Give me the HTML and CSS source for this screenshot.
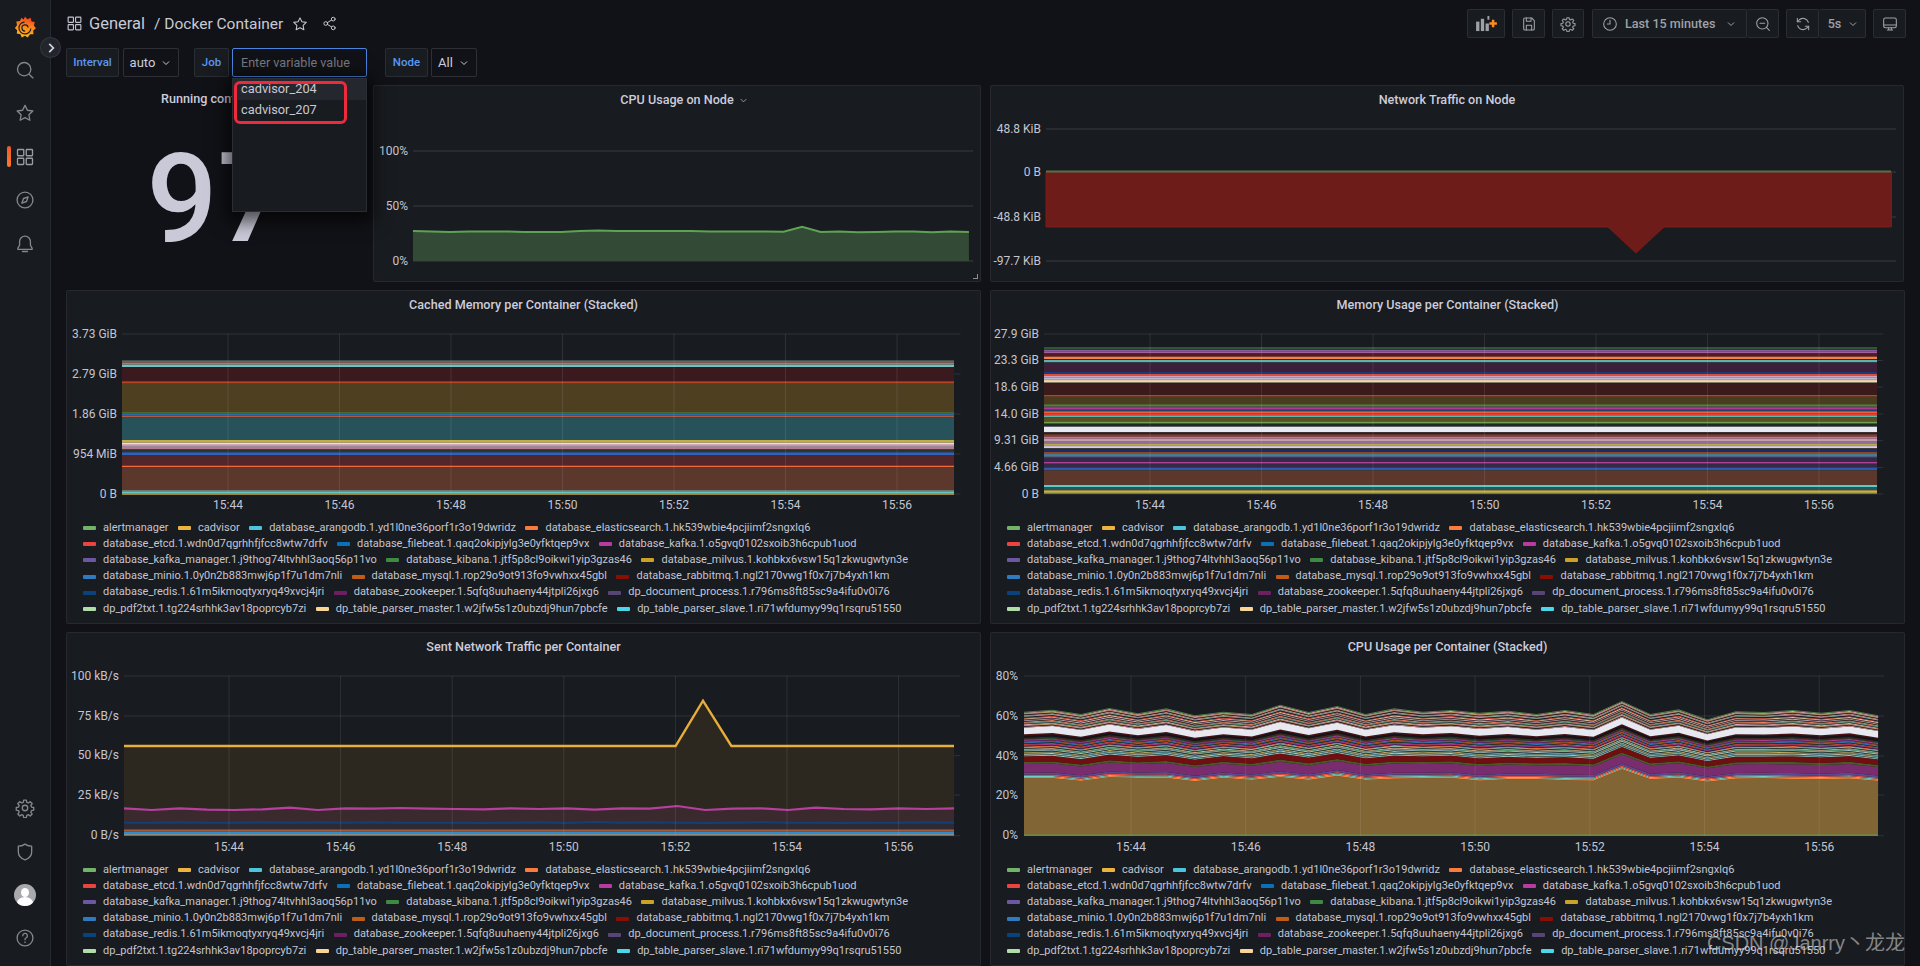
FILE: index.html
```html
<!DOCTYPE html>
<html lang="en">
<head>
<meta charset="utf-8">
<title>Docker Container - Grafana</title>
<link rel="stylesheet" href="styles.css">
</head>
<body>
<div class="app">
  <nav class="sidebar">
    <button class="side-toggle" aria-label="Expand"><svg viewBox="0 0 24 24" class="ico-toggle"><path d="M9 5l7 7-7 7"/></svg></button>
    <div class="side-group side-top">
      <a class="side-item"><svg viewBox="0 0 24 24" class="logo">
        <defs><linearGradient id="lg" x1="0.6" y1="0" x2="0.35" y2="1"><stop offset="0" stop-color="#f2401c"/><stop offset="0.5" stop-color="#fa8a1c"/><stop offset="1" stop-color="#fdbb18"/></linearGradient></defs>
        <path fill="url(#lg)" d="M12 .6l2.6 3 3.5-1.6 1 3.900 3.600.7-1 3.800 2.200 3-2.900 2.500.2 4-3.700.1L15 23.400l-3-1.800-3.500 1.800-1.500-3.600-4-.6.5-3.700L1 13l2.300-3-.8-4 4-.5L8 1.900l2.500 2z"/>
        <path fill="none" stroke="#1a1c20" stroke-width="1.300" d="M11.500 6.600a6.500 6.500 0 1 0 6.900 7.100"/>
        <path fill="none" stroke="#1a1c20" stroke-width="1.300" d="M15.400 12.600a3.400 3.400 0 1 0-3.200 3.800"/>
      </svg></a>
      <a class="side-item"><svg viewBox="0 0 24 24" class="ico"><circle cx="11" cy="11" r="8"/><path d="M17 17l4.500 4.500"/></svg></a>
      <a class="side-item"><svg viewBox="0 0 24 24" class="ico"><path d="M12 2.800l2.900 5.900 6.500.9-4.700 4.600 1.100 6.500-5.800-3.100-5.800 3.100 1.100-6.500-4.700-4.600 6.500-.9z"/></svg></a>
      <a class="side-item side-active"><svg viewBox="0 0 24 24" class="ico ico-on"><rect x="3" y="3" width="7.500" height="7.500" rx=".8"/><rect x="13.500" y="3" width="7.500" height="7.500" rx=".8"/><rect x="3" y="13.500" width="7.500" height="7.500" rx=".8"/><rect x="13.500" y="13.500" width="7.500" height="7.500" rx=".8"/></svg></a>
      <a class="side-item"><svg viewBox="0 0 24 24" class="ico"><circle cx="12" cy="12" r="9.500"/><path d="M15.800 8.200l-2 5.600-5.600 2 2-5.600z"/></svg></a>
      <a class="side-item"><svg viewBox="0 0 24 24" class="ico"><path d="M12 2.500a6.500 6.500 0 0 0-6.500 6.500v4.500L3.500 17v1.500h17V17l-2-3.500V9A6.500 6.500 0 0 0 12 2.500z"/><path d="M9 21h6"/></svg></a>
    </div>
    <div class="side-group side-bottom">
      <a class="side-item"><svg viewBox="0 0 24 24" class="ico"><circle cx="12" cy="12" r="3.300"/><path d="M10.400 2.500h3.200l.5 2.700 1.900.8 2.300-1.600 2.300 2.300-1.600 2.300.8 1.900 2.700.5v3.200l-2.700.5-.8 1.900 1.600 2.300-2.300 2.300-2.300-1.600-1.900.8-.5 2.700h-3.200l-.5-2.700-1.900-.8-2.300 1.600-2.300-2.300 1.600-2.300-.8-1.900-2.700-.5v-3.200l2.700-.5.8-1.900-1.600-2.300 2.300-2.300 2.300 1.600 1.900-.8z"/></svg></a>
      <a class="side-item"><svg viewBox="0 0 24 24" class="ico"><path d="M12 2.500c2.500 1.700 5.200 2.500 8 2.500v7c0 4.500-3.200 7.800-8 9.500-4.800-1.700-8-5-8-9.500V5c2.800 0 5.500-.8 8-2.500z"/></svg></a>
      <a class="side-item"><span class="avatar"><span class="avatar-head"></span><span class="avatar-body"></span></span></a>
      <a class="side-item"><svg viewBox="0 0 24 24" class="ico"><circle cx="12" cy="12" r="9.500"/><path d="M9.300 9.300a2.800 2.800 0 1 1 4.200 2.400c-1 .6-1.500 1.200-1.500 2.300"/><path d="M12 16.800v.6"/></svg></a>
    </div>
  </nav>

  <main class="main">
    <header class="topbar">
      <svg viewBox="0 0 24 24" class="tico crumb-ico"><rect x="3" y="3" width="7.500" height="7.500" rx=".8"/><rect x="13.500" y="3" width="7.500" height="7.500" rx=".8"/><rect x="3" y="13.500" width="7.500" height="7.500" rx=".8"/><rect x="13.500" y="13.500" width="7.500" height="7.500" rx=".8"/></svg>
      <span class="crumb">General</span>
      <span class="crumb crumb-sep">/ Docker Container</span>
      <svg viewBox="0 0 24 24" class="tico crumb-star"><path d="M12 2.800l2.900 5.900 6.500.9-4.700 4.600 1.100 6.500-5.800-3.100-5.800 3.100 1.100-6.500-4.700-4.600 6.500-.9z"/></svg>
      <svg viewBox="0 0 24 24" class="tico crumb-share"><circle cx="18" cy="5" r="3"/><circle cx="6" cy="12" r="3"/><circle cx="18" cy="19" r="3"/><path d="M8.700 10.500l6.600-4M8.700 13.500l6.600 4"/></svg>
      <div class="tools">
        <button class="tbtn t-add"><svg viewBox="0 0 24 18" class="addico"><rect x="1" y="7" width="3.500" height="10" /><rect x="6" y="4" width="3.500" height="13"/><rect x="11" y="9" width="3.500" height="8"/><rect x="13" y="1" width="2" height="4"/><path class="plus" d="M15 9h8M19 5v8"/></svg></button>
        <button class="tbtn t-save"><svg viewBox="0 0 24 24" class="bico"><path d="M4 5a2 2 0 0 1 2-2h10l4 4v12a2 2 0 0 1-2 2H6a2 2 0 0 1-2-2z"/><path d="M8 3v5h7V3M8 21v-7h8v7"/></svg></button>
        <button class="tbtn t-set"><svg viewBox="0 0 24 24" class="bico"><circle cx="12" cy="12" r="3.300"/><path d="M10.400 2.500h3.200l.5 2.700 1.900.8 2.300-1.600 2.300 2.300-1.600 2.300.8 1.900 2.700.5v3.200l-2.700.5-.8 1.900 1.600 2.300-2.300 2.300-2.300-1.600-1.900.8-.5 2.700h-3.200l-.5-2.700-1.900-.8-2.300 1.600-2.300-2.300 1.600-2.300-.8-1.900-2.700-.5v-3.200l2.700-.5.8-1.900-1.600-2.300 2.300-2.300 2.300 1.600 1.900-.8z"/></svg></button>
        <div class="tgroup t-time">
          <button class="tbtn t-range"><svg viewBox="0 0 24 24" class="bico"><circle cx="12" cy="12" r="9.500"/><path d="M12 6.500V12H8"/></svg><span class="trange-text">Last 15 minutes</span><svg viewBox="0 0 24 24" class="chev"><path d="M6 9l6 6 6-6"/></svg></button>
          <button class="tbtn t-zoom"><svg viewBox="0 0 24 24" class="bico"><circle cx="11" cy="11" r="8.500"/><path d="M17.200 17.200l4.300 4.300M7.500 11h7"/></svg></button>
        </div>
        <div class="tgroup t-refresh">
          <button class="tbtn t-sync"><svg viewBox="0 0 24 24" class="bico"><path d="M20 9.500A8.500 8.500 0 0 0 5.500 6.500L3.500 8.500"/><path d="M3.500 3.500v5h5"/><path d="M4 14.500a8.500 8.500 0 0 0 14.500 3l2-2"/><path d="M20.500 20.500v-5h-5"/></svg></button>
          <button class="tbtn t-int"><span class="trange-text">5s</span><svg viewBox="0 0 24 24" class="chev"><path d="M6 9l6 6 6-6"/></svg></button>
        </div>
        <button class="tbtn t-tv"><svg viewBox="0 0 24 24" class="bico"><rect x="2.500" y="3" width="19" height="14.500" rx="2.500"/><path d="M2.500 13.500h19M8 21h8M10 17.500V21M14 17.500V21"/></svg></button>
      </div>
    </header>

    <div class="vars">
      <span class="var-label v-interval">Interval</span>
      <button class="var-value v-auto">auto<svg viewBox="0 0 24 24" class="chev"><path d="M6 9l6 6 6-6"/></svg></button>
      <span class="var-label v-job">Job</span>
      <div class="var-input">
        <span class="placeholder">Enter variable value</span>
        <div class="dropdown">
          <div class="dd-item dd-hover">cadvisor_204</div>
          <div class="dd-item">cadvisor_207</div>
          <span class="dd-mark"></span>
        </div>
      </div>
      <span class="var-label v-node">Node</span>
      <button class="var-value v-all">All<svg viewBox="0 0 24 24" class="chev"><path d="M6 9l6 6 6-6"/></svg></button>
    </div>

    <div class="dash">
      <div class="row row-top">
        <section class="stat">
          <h2 class="p-title">Running containers</h2>
          <div class="stat-value">97</div>
        </section>
        <section class="panel">
          <h2 class="p-title">CPU Usage on Node<svg viewBox="0 0 24 24" class="chev title-chev"><path d="M6 9l6 6 6-6"/></svg></h2>
          <svg class="chart chart-s" data-chart="nodeCpu"></svg>
          <span class="resize"></span>
        </section>
        <section class="panel">
          <h2 class="p-title">Network Traffic on Node</h2>
          <svg class="chart chart-s" data-chart="nodeNet"></svg>
        </section>
      </div>
      <div class="row row-wide">
        <section class="panel">
          <h2 class="p-title">Cached Memory per Container (Stacked)</h2>
          <svg class="chart chart-l" data-chart="cached"></svg>
          <div class="legend"></div>
        </section>
        <section class="panel">
          <h2 class="p-title">Memory Usage per Container (Stacked)</h2>
          <svg class="chart chart-l" data-chart="memory"></svg>
          <div class="legend"></div>
        </section>
      </div>
      <div class="row row-wide">
        <section class="panel">
          <h2 class="p-title">Sent Network Traffic per Container</h2>
          <svg class="chart chart-l" data-chart="sent"></svg>
          <div class="legend"></div>
        </section>
        <section class="panel">
          <h2 class="p-title">CPU Usage per Container (Stacked)</h2>
          <svg class="chart chart-l" data-chart="cpu"></svg>
          <div class="legend"></div>
        </section>
      </div>
    </div>
  </main>
</div>
<div class="watermark">CSDN @Janrry丶龙龙</div>
<script src="charts.js"></script>
</body>
</html>
```
FILE: styles.css
```css
* { box-sizing: border-box; }
html, body { margin: 0; height: 966px; overflow: hidden; }
body { background: #111217; color: #ccccdc; font-family: Roboto, "Liberation Sans", sans-serif; font-size: 13px; }
button { font: inherit; color: inherit; background: none; border: 0; padding: 0; }
.app { display: flex; height: 966px; }

.sidebar { position: relative; flex: none; width: 51px; height: 100%; background: #181b1f; border-right: 1px solid rgba(204,204,220,.09); display: flex; flex-direction: column; justify-content: space-between; z-index: 3; }
.side-top { padding-top: 5px; }
.side-bottom { padding-bottom: 6px; }
.side-item { position: relative; display: flex; align-items: center; justify-content: center; height: 43.4px; }
.ico { width: 20px; height: 20px; fill: none; stroke: #85878f; stroke-width: 1.6; stroke-linejoin: round; stroke-linecap: round; }
.ico-on { stroke: #9a9ca4; }
.logo { width: 22px; height: 24px; }
.side-active::before { content: ""; position: absolute; left: 7px; top: 11px; width: 4px; height: 21px; border-radius: 2px; background: linear-gradient(#f05a28, #fb7a2c); }
.side-toggle { position: absolute; left: 40px; top: 37px; width: 21px; height: 21px; border-radius: 50%; background: #22252b; border: 1px solid rgba(204,204,220,.1); display: flex; align-items: center; justify-content: center; z-index: 4; }
.ico-toggle { width: 14px; height: 14px; fill: none; stroke: #d0d1da; stroke-width: 3; }
.avatar { position: relative; display: block; width: 22px; height: 22px; border-radius: 50%; background: #a9a9ad; overflow: hidden; }
.avatar-head { position: absolute; left: 7px; top: 4px; width: 8px; height: 9px; border-radius: 50%; background: #fff; }
.avatar-body { position: absolute; left: 3px; top: 13px; width: 16px; height: 12px; border-radius: 50%; background: #fff; }

.main { flex: 1; min-width: 0; padding: 9px 14px 0 15px; }
.topbar { display: flex; align-items: center; height: 29px; margin-bottom: 10px; }
.tico { fill: none; stroke: #c4c5d0; stroke-width: 1.6; stroke-linejoin: round; stroke-linecap: round; flex: none; }
.crumb-ico { width: 17px; height: 17px; margin-left: 0; margin-right: 6px; }
.crumb { font-size: 16.5px; color: #c8c9d4; }
.crumb-sep { margin-left: 9px; font-size: 15.5px; }
.crumb-star { width: 16px; height: 16px; margin-left: 9px; }
.crumb-share { width: 15px; height: 15px; margin-left: 14px; }

.tools { display: flex; align-items: center; margin-left: auto; gap: 7px; }
.tbtn { display: flex; align-items: center; justify-content: center; height: 29px; background: #181b1f; border: 1px solid rgba(204,204,220,.1); border-radius: 2px; color: #9fa1a9; font-size: 12.6px; font-weight: 500; white-space: nowrap; }
.tgroup { display: flex; }
.tgroup .tbtn + .tbtn { border-left: 0; }
.t-add { width: 38px; }
.t-save { width: 33px; }
.t-set { width: 32px; }
.t-time { margin-left: 1px; }
.t-range { width: 155px; justify-content: flex-start; padding-left: 9px; }
.t-zoom { width: 32px; }
.t-sync { width: 33px; }
.t-int { width: 47px; padding-left: 3px; }
.t-tv { width: 33px; }
.bico { width: 16px; height: 16px; fill: none; stroke: #9fa1a9; stroke-width: 1.6; stroke-linejoin: round; stroke-linecap: round; flex: none; }
.addico { width: 23px; height: 17px; fill: #9fa1a9; }
.plus { fill: none; stroke: #fb8c22; stroke-width: 2.6; }
.trange-text { margin-left: 7px; }
.t-int .trange-text { margin-left: 0; }
.chev { width: 12px; height: 12px; fill: none; stroke: currentColor; stroke-width: 2; flex: none; }
.t-range .chev { margin-left: 10px; }
.t-int .chev { margin-left: 6px; }

.vars { display: flex; align-items: stretch; height: 29px; margin-bottom: 8px; }
.var-label { display: flex; align-items: center; justify-content: center; background: #181b1f; border: 1px solid rgba(204,204,220,.1); border-radius: 2px; color: #5a97f4; font-size: 11.5px; font-weight: 500; padding-bottom: 2px; }
.var-value { display: flex; align-items: center; justify-content: center; gap: 5px; background: #111217; border: 1px solid rgba(204,204,220,.16); border-radius: 2px; color: #ccccdc; font-size: 13px; }
.v-interval { width: 53px; }
.v-auto { width: 56px; margin-left: 4px; }
.v-job { width: 35px; margin-left: 15px; }
.v-node { width: 43px; margin-left: 18px; }
.v-all { width: 46px; margin-left: 3px; }
.var-input { position: relative; width: 135px; margin-left: 3px; background: #111217; border: 1px solid #4a86e0; border-radius: 2px; display: flex; align-items: center; padding-left: 8px; }
.placeholder { color: #767a82; font-size: 12.6px; }
.dropdown { position: absolute; left: -1px; right: -1px; top: 29px; height: 134px; background: #181b1f; border: 1px solid rgba(204,204,220,.1); box-shadow: 0 4px 16px 6px rgba(0,0,0,.6); z-index: 5; }
.dd-item { height: 21px; line-height: 19px; padding-left: 8px; color: #c8c9d4; font-size: 12.8px; }
.dd-hover { background: #24272d; }
.dd-mark { position: absolute; left: 1px; top: 2px; width: 113px; height: 43px; border: 3px solid #ef2a3c; border-radius: 6px; }

.dash { display: flex; flex-direction: column; gap: 8px; }
.row { display: grid; }
.row-top { grid-template-columns: 299px 608px 915px; column-gap: 8px; height: 197px; }
.row-top > .panel:last-child { margin-left: 1px; }
.row-wide { grid-template-columns: 915px 915px; column-gap: 9px; height: 334px; }
.panel { position: relative; background: #181b1f; border: 1px solid rgba(204,204,220,.08); border-radius: 2px; min-width: 0; }
.p-title { margin: 0; height: 27px; padding-top: 6px; font-size: 12.6px; font-weight: 500; line-height: 16px; text-align: center; color: #ccccdc; white-space: nowrap; }
.title-chev { margin-left: 4px; margin-right: -15px; vertical-align: -2px; color: #9fa1a9; width: 11px; height: 11px; }
.chart { display: block; width: 100%; }
.chart-s { height: 168px; }
.chart-l { height: 201px; }
.chart text { font-family: Roboto, "Liberation Sans", sans-serif; font-size: 12px; fill: #c4c5d2; }
.resize { position: absolute; right: 2px; bottom: 2px; width: 5px; height: 5px; border-right: 1px solid #8d8f96; border-bottom: 1px solid #8d8f96; }
.stat { position: relative; min-width: 0; }
.stat-value { font-size: 125px; font-weight: 500; line-height: 125px; margin-top: 24px; padding-left: 4px; text-align: center; color: #c9c9d8; }

.legend { padding: 0 0 0 16px; font-size: 11px; color: #c4c5d2; }
.lg-row { display: flex; height: 16.2px; align-items: center; white-space: nowrap; }
.lg-item { display: flex; align-items: center; margin-right: 9.5px; }
.lg-swatch { width: 13px; height: 4px; border-radius: 1px; margin-right: 7px; margin-top: 2px; flex: none; }

.watermark { position: absolute; right: 15px; bottom: 10px; font-family: "Liberation Sans", "Noto Sans CJK SC", sans-serif; font-size: 20px; color: rgba(225,225,225,.55); z-index: 6; white-space: nowrap; }
```
FILE: charts.js
```js
(function () {
  var C = ['#73b26a','#eeb33f','#4cc4da','#f97c3e','#ea4440','#0a70b8','#ba3b9f','#6c58a0','#3f8a42','#c9a227','#2f7bbf','#c15c17','#890f02','#0a437c','#6d1f62','#584477','#b0dca8','#f8d496','#4bd6ea'];
  var names = [
    ['alertmanager','cadvisor','database_arangodb.1.yd1l0ne36porf1r3o19dwridz','database_elasticsearch.1.hk539wbie4pcjiimf2sngxlq6'],
    ['database_etcd.1.wdn0d7qgrhhfjfcc8wtw7drfv','database_filebeat.1.qaq2okipjylg3e0yfktqep9vx','database_kafka.1.o5gvq0102sxoib3h6cpub1uod'],
    ['database_kafka_manager.1.j9thog74ltvhhl3aoq56p11vo','database_kibana.1.jtf5p8cl9oikwi1yip3gzas46','database_milvus.1.kohbkx6vsw15q1zkwugwtyn3e'],
    ['database_minio.1.0y0n2b883mwj6p1f7u1dm7nli','database_mysql.1.rop29o9ot913fo9vwhxx45gbl','database_rabbitmq.1.ngl2170vwg1f0x7j7b4yxh1km'],
    ['database_redis.1.61m5ikmoqtyxryq49xvcj4jri','database_zookeeper.1.5qfq8uuhaeny44jtpli26jxg6','dp_document_process.1.r796ms8ft85sc9a4ifu0v0i76'],
    ['dp_pdf2txt.1.tg224srhhk3av18poprcyb7zi','dp_table_parser_master.1.w2jfw5s1z0ubzdj9hun7pbcfe','dp_table_parser_slave.1.ri71wfdumyy99q1rsqru51550']
  ];
  document.querySelectorAll('.legend').forEach(function (el) {
    var n = 0, html = '';
    names.forEach(function (row) {
      html += '<div class="lg-row">';
      row.forEach(function (t) {
        html += '<span class="lg-item"><i class="lg-swatch" style="background:' + C[n++] + '"></i>' + t + '</span>';
      });
      html += '</div>';
    });
    el.innerHTML = html;
  });

  var times = ['15:44','15:46','15:48','15:50','15:52','15:54','15:56'];
  var HGRID = 'rgba(204,204,220,.13)', VGRID = 'rgba(204,204,220,.12)';

  function poly(pts, fill, stroke, w) {
    return '<polygon points="' + pts.map(function (p) { return p[0].toFixed(1) + ',' + p[1].toFixed(1); }).join(' ') +
      '" fill="' + fill + '"' + (stroke ? ' stroke="' + stroke + '" stroke-width="' + (w || 1) + '"' : '') + '/>';
  }
  function line(pts, stroke, w) {
    return '<polyline fill="none" points="' + pts.map(function (p) { return p[0].toFixed(1) + ',' + p[1].toFixed(1); }).join(' ') +
      '" stroke="' + stroke + '" stroke-width="' + (w || 1) + '"/>';
  }
  function rect(x, y, w, h, fill) {
    return '<rect x="' + x + '" y="' + y + '" width="' + w + '" height="' + h + '" fill="' + fill + '"/>';
  }
  function frame(c, inner) {
    var s = '';
    c.y.forEach(function (t) {
      s += '<line x1="' + c.x0 + '" x2="' + c.x1 + '" y1="' + t[0] + '" y2="' + t[0] + '" stroke="' + HGRID + '" stroke-width="' + (c.hw || 1) + '"/>';
      s += '<text x="' + c.lx + '" y="' + (t[0] + 3.5) + '" text-anchor="end">' + t[1] + '</text>';
    });
    s += inner;
    if (c.t0) {
      times.forEach(function (t, i) {
        var x = c.t0 + c.ts * i;
        s += '<line x1="' + x + '" x2="' + x + '" y1="' + c.y[0][0] + '" y2="' + c.y[c.y.length - 1][0] + '" stroke="' + VGRID + '"/>';
        s += '<text x="' + x + '" y="' + c.ty + '" text-anchor="middle">' + t + '</text>';
      });
    }
    return s;
  }
  function bands(x0, x1, list) {
    return list.map(function (b) {
      return rect(x0, 300 + b[0] / 3, x1 - x0, (b[1] - b[0]) / 3, b[2]);
    }).join('');
  }

  var cachedBands = [
    [181,188,'#5b6a62'],[188,192,'#e0606a'],[192,194,'#8a7a70'],[194,201,'#74c0bc'],[201,244,'#3a1a1e'],
    [244,251,'#b5431f'],[251,335,'#4d3f20'],[335,340,'#4b6a2c'],[340,346,'#2a6bb0'],[346,349,'#6c58a0'],[349,352,'#f0703a'],
    [352,420,'#27525a'],[420,428,'#bfae4a'],[428,432,'#e9e2c0'],[432,436,'#d9a8c0'],[436,440,'#d0d0d8'],[440,447,'#b07a90'],
    [447,452,'#2b4a2e'],[452,457,'#3a3028'],[457,465,'#2f62b8'],[465,497,'#532729'],[497,502,'#f0693a'],[502,570,'#5c382c'],
    [570,574,'#6a7a70'],[574,581,'#5fc8c8'],[581,584,'#d8b040']
  ];
  var memoryBands = [
    [141,149,'#2c5a2e'],[150,155,'#8a5aa0'],[155,160,'#a060a0'],[160,170,'#541c22'],[170,177,'#f5804a'],[177,180,'#2a2a30'],[180,187,'#5fb0b0'],
    [188,216,'#3c1f38'],[216,222,'#1a3a80'],[222,228,'#d8503a'],[228,232,'#d0a0c0'],[232,238,'#b8b8d0'],[238,243,'#e8c8a0'],[243,248,'#e8e0b0'],[248,250,'#403030'],
    [250,285,'#3a1a1a'],[285,290,'#a84a22'],[290,313,'#4a3c20'],[313,320,'#55822f'],[320,324,'#7a3a90'],[324,328,'#b03a90'],[328,332,'#1a68b0'],[332,334,'#303040'],
    [334,340,'#f0603a'],[340,346,'#e04038'],[346,352,'#60b8a8'],[352,365,'#5a5028'],[365,371,'#70a050'],[371,380,'#1c2a22'],
    [380,397,'#e8e8f2'],[397,403,'#301c20'],[403,410,'#80402a'],[410,416,'#d07090'],[416,423,'#c0a0b0'],[423,430,'#907090'],[430,436,'#b8a850'],[436,441,'#c8b8d0'],[441,445,'#d0d0d8'],[445,447,'#303030'],
    [447,456,'#1e2a60'],[456,462,'#8a4a28'],[462,468,'#4a7a90'],[468,473,'#506080'],[473,486,'#352a45'],[486,491,'#b04098'],[491,503,'#352a45'],[503,511,'#2a5ab0'],
    [511,555,'#5c382c'],[555,561,'#5fc8c8'],[561,571,'#1e5a60'],[571,576,'#d8a840'],[576,581,'#a8a040']
  ];

  var charts = {
    nodeCpu: function () {
      var vals = [231,231.5,232,231.5,231.5,231.5,232,232,232,231,230.5,231,231,231,231,231,231.5,231.5,231.5,231.5,231.8,226.8,232,231.5,232.3,232,231.5,231.5,232.3,231.5,232];
      var pts = vals.map(function (v, i) { return [413 + i * 18.53, v]; });
      var area = poly([[413, 261]].concat(pts, [[969, 261]]), '#334a36');
      return frame({ y: [[151,'100%'],[206,'50%'],[261,'0%']], x0: 413, x1: 973, lx: 408, hw: 1.5 }, area + line(pts, '#5ea354', 2));
    },
    nodeNet: function () {
      var red = [[1046,172],[1891.5,172],[1891.5,227],[1664,227],[1636,253],[1608,227],[1046,227]];
      var inner = poly(red, '#6e1c1a', '#7e1a16', 1) + line([[1046,171.5],[1891,171.5]], '#56714a', 2);
      return frame({ y: [[129,'48.8 KiB'],[172,'0 B'],[217,'-48.8 KiB'],[261,'-97.7 KiB']], x0: 1046, x1: 1896, lx: 1041, hw: 1.5 }, inner);
    },
    cached: function () {
      return frame({ y: [[334,'3.73 GiB'],[374,'2.79 GiB'],[414,'1.86 GiB'],[454,'954 MiB'],[494,'0 B']], x0: 122, x1: 960.5, lx: 117, t0: 228, ts: 111.5, ty: 509 },
        bands(122, 954, cachedBands));
    },
    memory: function () {
      return frame({ y: [[334,'27.9 GiB'],[360.5,'23.3 GiB'],[387,'18.6 GiB'],[414,'14.0 GiB'],[440.7,'9.31 GiB'],[467.5,'4.66 GiB'],[494,'0 B']], x0: 1044, x1: 1883, lx: 1039, t0: 1150, ts: 111.5, ty: 509 },
        bands(1044, 1877, memoryBands));
    },
    sent: function () {
      var x = function (i) { return 124 + i * 27.67; };
      var pinkZ = [505,510,505,509,510,508,503,510,505,506,504,506,507,508,505,507,505,509,505,506,498,510,506,505,510,503,507,508,505,507,505];
      var navyZ = [548,548,547,548,548,547,548,547,548,547,548,548,548,549,548,547,549,546,548,547,548,549,548,547,548,548,549,548,548,547,548];
      var pink = pinkZ.map(function (z, i) { return [x(i), 640 + z / 3]; });
      var navy = navyZ.map(function (z, i) { return [x(i), 640 + z / 3]; });
      var cad = [[124,746],[675.6,746],[703,700.7],[731.4,746],[954,746]];
      var s = poly([[124,835.7]].concat(cad, [[954,835.7]]), '#2c2820');
      s += poly([[124,835.7]].concat(pink, [[954,835.7]]), '#3a2a2e');
      s += poly([[124,835.7]].concat(navy, [[954,835.7]]), '#2d2a34');
      s += rect(124, 829.5, 830, 1.5, '#a85a3a');
      s += rect(124, 831, 830, 1, '#3a6a70');
      s += rect(124, 832, 830, 2, '#2e8fd0');
      s += rect(124, 834, 830, 1.7, '#8a8a80');
      s += line(navy, '#123f78', 2) + line(pink, '#b83fa0', 2.2) + line(cad, '#e8ad3a', 2.4);
      return frame({ y: [[676,'100 kB/s'],[716,'75 kB/s'],[755.7,'50 kB/s'],[795,'25 kB/s'],[835.7,'0 B/s']], x0: 124, x1: 960, lx: 119, t0: 229, ts: 111.6, ty: 851 }, s);
    },
    cpu: function () {
      var topZ = [215,209,222,204,220,205,226,215,222,194,216,198,222,205,215,210,218,212,222,210,222,183,222,208,238,214,216,210,218,210,226];
      var baseZ = [415,415,423,412,414,414,424,414,420,412,420,408,420,416,415,414,422,418,418,421,422,388,418,414,425,416,415,417,418,416,423];
      var x = function (i) { return 1024 + i * 28.47; };
      function layer(a, b, color) {
        var fa = (415 - a) / 200, fb = (415 - b) / 200, up = [], down = [];
        topZ.forEach(function (t, i) {
          var base = baseZ[i], h = t - base;
          up.push([x(i), 640 + (base + fa * h) / 3]);
          down.unshift([x(i), 640 + (base + fb * h) / 3]);
        });
        return poly(up.concat(down), color);
      }
      function stripes(from, to, step, list) {
        var out = '', z = from, n = 0;
        while (z > to) { out += layer(z, z - step, list[n++ % list.length]); z -= step; }
        return out;
      }
      var s = poly([[1024,835.7]].concat(baseZ.map(function (z, i) { return [x(i), 640 + z / 3]; }), [[1878,835.7]]), '#816534');
      s += rect(1024, 834.5, 854, 1.2, '#6a9a50');
      [[415,411,'#f0843c'],[411,408,'#6ed0c0'],[408,404,'#e24d42'],[404,398,'#584a90'],[398,372,'#7a2d6e'],[372,366,'#4a5a26'],[366,349,'#6e0f12']]
        .forEach(function (b) { s += layer(b[0], b[1], b[2]); });
      s += stripes(349, 322, 2.5, ['#8fd0c8','#4a6a60','#c8d0b0','#3f8aa0','#c8b060','#2c3a38','#a8c8d0','#5aa878','#e0b090','#2a4038']);
      s += stripes(322, 298, 2.5, ['#f0703a','#26285a','#a83a98','#e04a40','#1c3a28','#2f7bbf','#c15c17','#5a2a80','#b04098','#2a6a40']);
      s += layer(298, 293, '#40281e') + layer(293, 287, '#12141a') + layer(287, 283, '#4a1216');
      s += layer(283, 263, '#e8e8f0');
      s += stripes(263, 218, 2.5, ['#d09090','#2c2830','#c8a060','#e8a8b0','#3a4a48','#70a890','#f0805a','#403028','#c0b0c0','#5a3a50','#e8d0a0','#d84a38','#202028','#8ab0a0']);
      s += layer(218, 215, '#4f7a4a');
      return frame({ y: [[676,'80%'],[716,'60%'],[756,'40%'],[795,'20%'],[835.7,'0%']], x0: 1024, x1: 1884, lx: 1018, t0: 1131, ts: 114.7, ty: 851 }, s);
    }
  };

  document.querySelectorAll('svg[data-chart]').forEach(function (el) {
    var r = el.getBoundingClientRect();
    el.setAttribute('viewBox', r.left + ' ' + r.top + ' ' + r.width + ' ' + r.height);
    el.innerHTML = charts[el.getAttribute('data-chart')]();
  });
})();
```
